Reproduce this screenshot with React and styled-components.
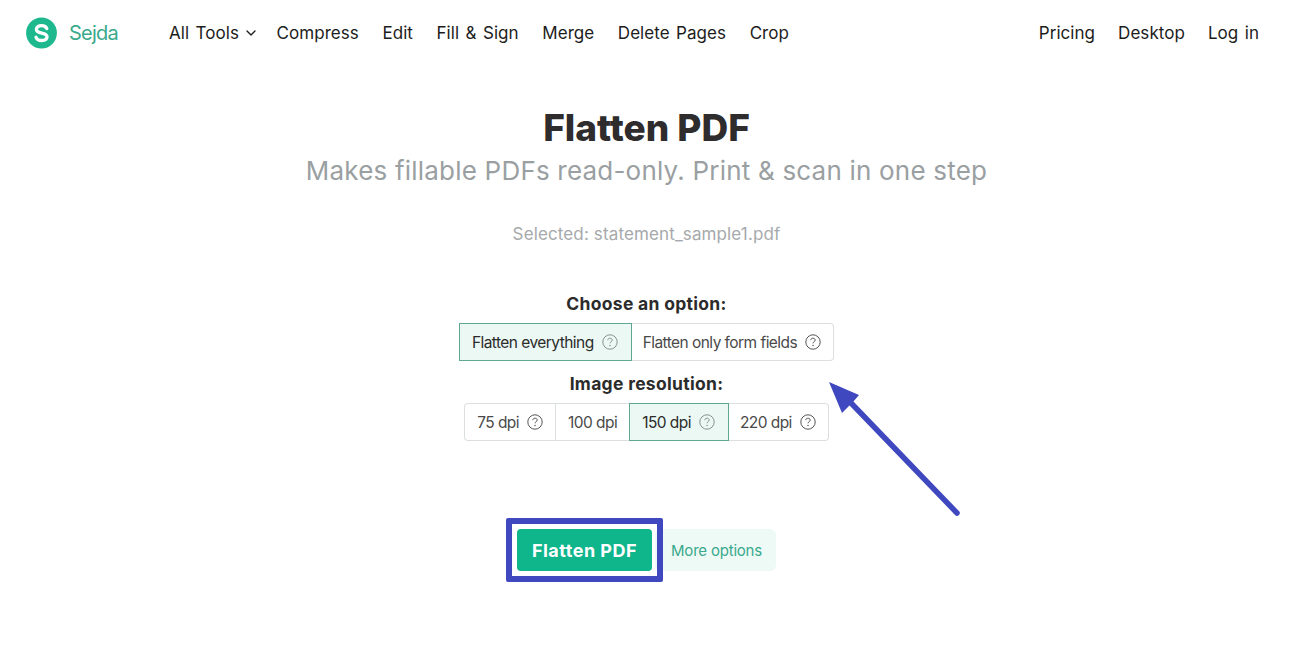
import React from 'react';
import styled, { createGlobalStyle } from 'styled-components';
import { ChevronDown } from 'lucide-react';

const GlobalStyle = createGlobalStyle`
    html, body {
        margin: 0;
        padding: 0;
        background: #fff;
    }

    body {
        font-family: Inter, "Liberation Sans", sans-serif;
        color: #222;
    }
`;

const leftLinks = ['Compress', 'Edit', 'Fill & Sign', 'Merge', 'Delete Pages', 'Crop'];
const rightLinks = ['Pricing', 'Desktop', 'Log in'];

const HelpIcon = ({ muted }) => (
    <HelpSvg viewBox="0 0 16 16" $muted={muted}>
        <circle cx="8" cy="8" r="7.2" fill="none" stroke="currentColor" strokeWidth="1" />
        <path d="M5.8 6.2c0-1.3 1-2 2.2-2s2.2.7 2.2 1.9c0 1.6-2.2 1.6-2.2 3.2" fill="none" stroke="currentColor" strokeWidth="1" />
        <circle cx="8" cy="11.4" r=".75" fill="currentColor" />
    </HelpSvg>
);

const Option = ({ label, help, active, muted }) => (
    <OptionButton $active={active}>
        <span>{label}</span>
        {help && <HelpIcon muted={muted} />}
    </OptionButton>
);

const App = () => (
    <Page>
        <GlobalStyle />
        <Header>
            <Brand>
                <svg width="31" height="32" viewBox="0 0 31 32">
                    <circle cx="15.5" cy="16" r="15.4" fill="#1db88e" />
                    <path d="M20.8 11.6c-.7-1.9-2.7-3-5.2-3-3 0-5.2 1.5-5.2 3.9 0 5 10.6 2.4 10.6 7.2 0 2.4-2.2 3.8-5.4 3.8-2.8 0-4.9-1.2-5.6-3.3" fill="none" stroke="#fff" strokeWidth="3.3" strokeLinecap="round" />
                </svg>
                <BrandName>Sejda</BrandName>
            </Brand>
            <Nav>
                <NavLink>
                    All Tools
                    <ChevronDown size={16} strokeWidth={2} />
                </NavLink>
                {leftLinks.map(link => <NavLink key={link}>{link}</NavLink>)}
            </Nav>
            <RightNav>
                {rightLinks.map(link => <NavLink key={link}>{link}</NavLink>)}
            </RightNav>
        </Header>

        <Main>
            <Title>Flatten PDF</Title>
            <Subtitle>Makes fillable PDFs read-only. Print &amp; scan in one step</Subtitle>
            <Selected>Selected: statement_sample1.pdf</Selected>

            <OptionLabel>Choose an option:</OptionLabel>
            <OptionGroup>
                <Option label="Flatten everything" help active muted />
                <Option label="Flatten only form fields" help />
            </OptionGroup>

            <OptionLabel $second>Image resolution:</OptionLabel>
            <OptionGroup>
                <Option label="75 dpi" help />
                <Option label="100 dpi" />
                <Option label="150 dpi" help active muted />
                <Option label="220 dpi" help />
            </OptionGroup>

            <Actions>
                <SubmitButton>Flatten PDF</SubmitButton>
                <MoreOptions>More options</MoreOptions>
            </Actions>
        </Main>

        <Arrow viewBox="0 0 140 145" width="140" height="145">
            <path d="M129 133 L24 24" fill="none" stroke="#3f48bf" strokeWidth="5.5" strokeLinecap="round" />
            <polygon points="1,2 31,15 25,22 14,33" fill="#3f48bf" />
        </Arrow>
    </Page>
);

const Page = styled.div`
    position: relative;
    width: 1300px;
    height: 657px;
    overflow: hidden;
    background: #fff;
`;

const Header = styled.header`
    display: flex;
    align-items: center;
    height: 66px;
    padding: 0 41px 0 26px;
`;

const Brand = styled.div`
    display: flex;
    align-items: center;
    gap: 12px;
    width: 143px;
`;

const BrandName = styled.span`
    font-size: 20px;
    letter-spacing: -0.8px;
    color: #3aa98c;
`;

const Nav = styled.nav`
    display: flex;
    align-items: center;
    gap: 23.6px;
`;

const RightNav = styled(Nav)`
    margin-left: auto;
    gap: 23px;
`;

const NavLink = styled.a`
    display: flex;
    align-items: center;
    gap: 4px;
    font-size: 17px;
    letter-spacing: 0.05px;
    word-spacing: 1.6px;
    color: #1c1c1c;
    white-space: nowrap;

    svg {
        margin-right: -6px;
    }
`;

const Main = styled.main`
    display: flex;
    flex-direction: column;
    align-items: center;
    padding-right: 7px;
`;

const Title = styled.h1`
    margin: 39px 0 0;
    font-size: 37px;
    line-height: 46px;
    font-weight: 800;
    letter-spacing: 0;
    color: #2e2c2c;
`;

const Subtitle = styled.p`
    margin: 3px 0 0;
    font-size: 26px;
    line-height: 34px;
    letter-spacing: 0.2px;
    color: #9aa0a2;
`;

const Selected = styled.p`
    margin: 34px 0 0;
    font-size: 17px;
    line-height: 24px;
    letter-spacing: 0.13px;
    color: #a6a9ab;
`;

const OptionLabel = styled.div`
    margin-top: ${props => (props.$second ? '12px' : '46px')};
    font-size: 17.5px;
    line-height: 24px;
    font-weight: 700;
    letter-spacing: 0.3px;
    color: #2b2b2b;
`;

const OptionGroup = styled.div`
    display: flex;
    margin-top: 8px;
    height: 36px;
    border-radius: 3px;
    box-shadow: 0 0 0 1px #dcdfe0;
    background: #fff;
`;

const OptionButton = styled.div`
    display: flex;
    align-items: center;
    gap: 8px;
    padding: 0 12px;
    font-size: 15.5px;
    letter-spacing: -0.55px;
    white-space: nowrap;
    color: ${props => (props.$active ? '#2b2b2b' : '#4a4a4a')};
    background: ${props => (props.$active ? '#ebf8f4' : 'transparent')};
    box-shadow: ${props => (props.$active ? '0 0 0 1px #5fa792' : 'none')};
    border-right: 1px solid ${props => (props.$active ? 'transparent' : '#dcdfe0')};

    &:last-child {
        border-right: none;
    }
`;

const HelpSvg = styled.svg`
    width: 16px;
    height: 16px;
    flex: none;
    color: ${props => (props.$muted ? '#85928e' : '#555')};
`;

const Actions = styled.div`
    display: flex;
    align-items: stretch;
    gap: 3px;
    margin-top: 89px;
    height: 42px;
`;

const SubmitButton = styled.button`
    position: relative;
    width: 135px;
    border: none;
    border-radius: 4px;
    background: #0fb58b;
    color: #fff;
    font-family: inherit;
    font-size: 18px;
    font-weight: 700;
    letter-spacing: 0.5px;

    /* the box drawn round the button in the screenshot */
    &::after {
        content: '';
        position: absolute;
        inset: -11px;
        border: 6px solid #3f48bf;
        border-radius: 2px;
    }
`;

const MoreOptions = styled.a`
    display: flex;
    align-items: center;
    padding: 0 14px 0 16px;
    border-radius: 6px;
    background: #eefaf6;
    color: #3aa98c;
    font-size: 15px;
    letter-spacing: -0.2px;
`;

const Arrow = styled.svg`
    position: absolute;
    left: 828px;
    top: 380px;
`;

export default App;
